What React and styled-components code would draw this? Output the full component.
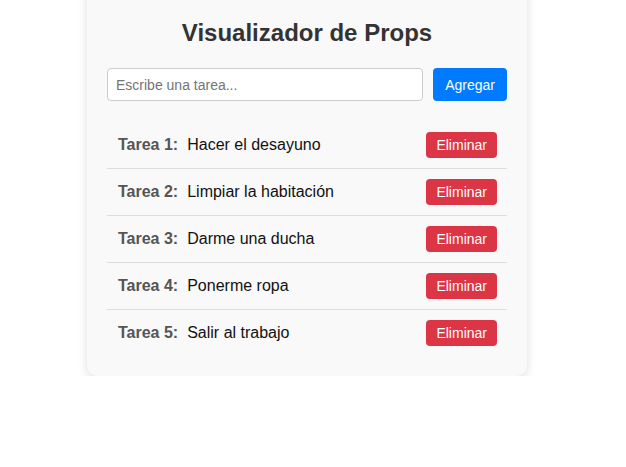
import React, { useState } from "react";
import styled, { createGlobalStyle } from "styled-components";

const GlobalStyle = createGlobalStyle`
  body {
    margin: 0;
    background: #fff;
    font-family: "Liberation Sans", Arial, sans-serif;
    overflow: hidden;
  }
`;

const Page = styled.div`
  display: flex;
  justify-content: center;
  padding-right: 12px;
`;

const Card = styled.div`
  width: 400px;
  margin-top: -21px;
  padding: 20px;
  background: #f9f9f9;
  border-radius: 10px;
  box-shadow: 0 2px 10px rgba(0, 0, 0, 0.14);
`;

const Title = styled.h2`
  margin: 20px 0 21px;
  text-align: center;
  font-size: 24px;
  font-weight: bold;
  color: #333;
`;

const Form = styled.div`
  display: flex;
  gap: 10px;
  margin-bottom: 21px;
`;

const Input = styled.input`
  flex: 1;
  height: 33px;
  box-sizing: border-box;
  padding: 0 8px;
  border: 1px solid #ccc;
  border-radius: 4px;
  font-family: inherit;
  font-size: 14px;
  outline: none;

  &::placeholder {
    color: #757575;
  }
`;

const Button = styled.button`
  border: none;
  border-radius: 4px;
  color: #fff;
  font-family: inherit;
  font-size: 14px;
  cursor: pointer;
  background: ${(p) => (p.$danger ? "#dc3545" : "#007bff")};
  padding: ${(p) => (p.$danger ? "5px 10px" : "0 12px")};
  height: ${(p) => (p.$danger ? "26px" : "33px")};
`;

const List = styled.ul`
  list-style: none;
  margin: 0;
  padding: 0;
`;

const Row = styled.li`
  display: flex;
  align-items: center;
  padding: 10px 10px 10px 11px;
  border-bottom: 1px solid #ddd;

  &:last-child {
    border-bottom: none;
  }
`;

const Label = styled.span`
  font-weight: bold;
  color: #555;
  font-size: 16px;
  margin-right: 9px;
`;

const Text = styled.span`
  flex: 1;
  font-size: 16px;
  color: #111;
`;

const initial = [
  "Hacer el desayuno",
  "Limpiar la habitación",
  "Darme una ducha",
  "Ponerme ropa",
  "Salir al trabajo",
];

export default function App() {
  const [tasks, setTasks] = useState(initial);
  const [value, setValue] = useState("");

  const add = () => {
    if (!value.trim()) return;
    setTasks([...tasks, value.trim()]);
    setValue("");
  };

  return (
    <Page>
      <GlobalStyle />
      <Card>
        <Title>Visualizador de Props</Title>
        <Form>
          <Input
            placeholder="Escribe una tarea..."
            value={value}
            onChange={(e) => setValue(e.target.value)}
          />
          <Button onClick={add}>Agregar</Button>
        </Form>
        <List>
          {tasks.map((t, i) => (
            <Row key={i}>
              <Label>Tarea {i + 1}:</Label>
              <Text>{t}</Text>
              <Button $danger onClick={() => setTasks(tasks.filter((_, j) => j !== i))}>
                Eliminar
              </Button>
            </Row>
          ))}
        </List>
      </Card>
    </Page>
  );
}
